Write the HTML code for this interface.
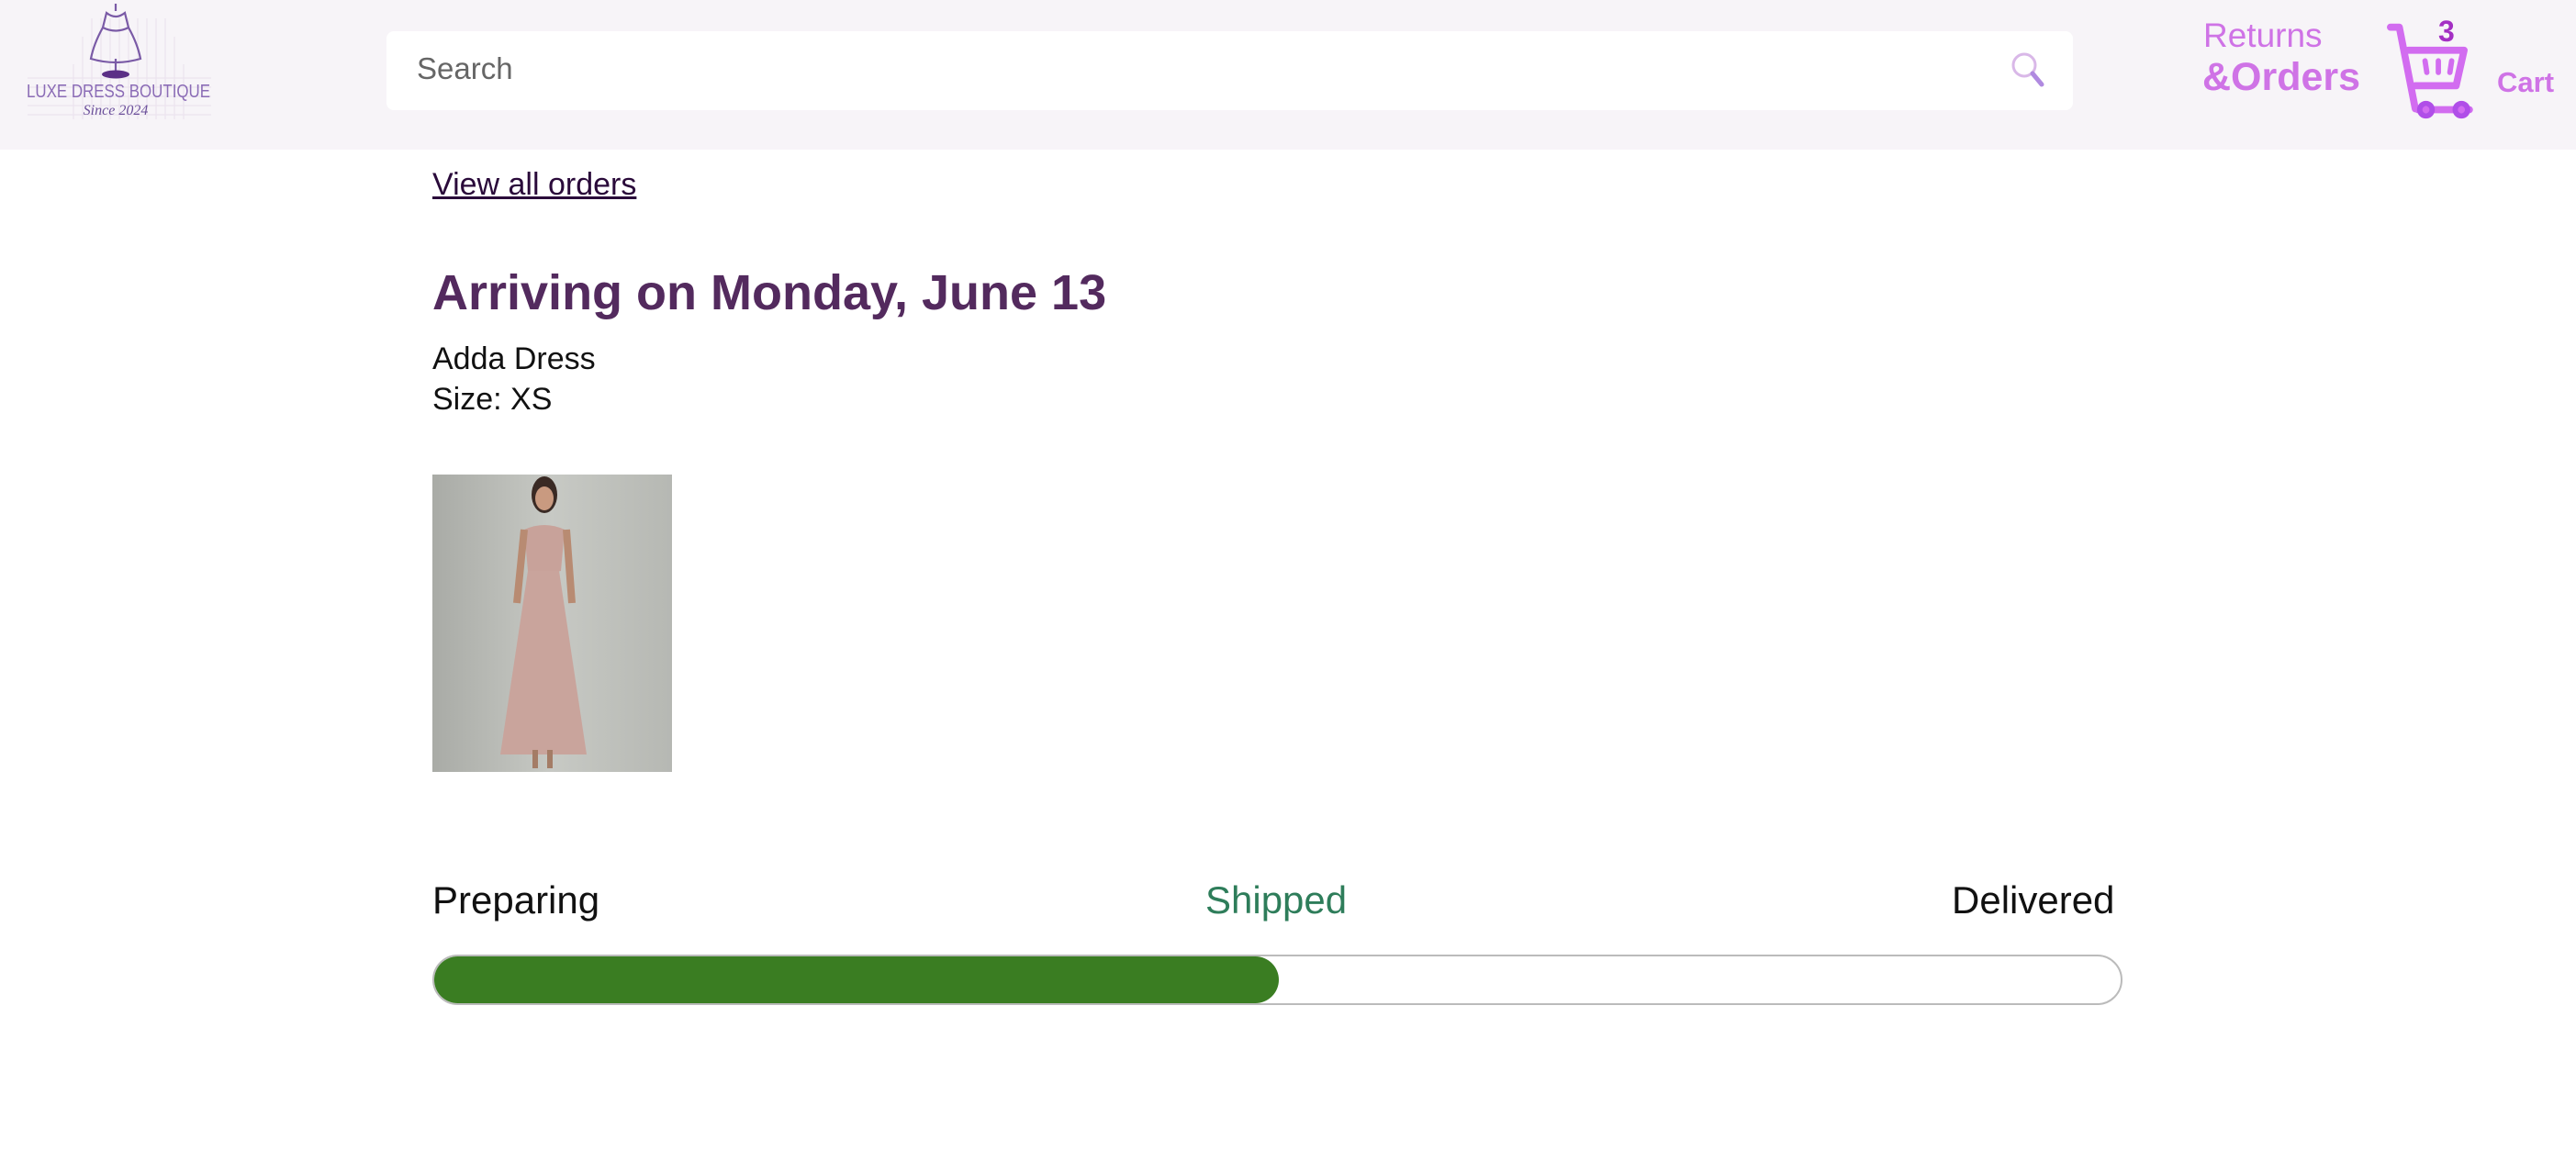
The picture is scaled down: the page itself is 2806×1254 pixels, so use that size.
<!DOCTYPE html>
<html><head><meta charset="utf-8"><style>
*{margin:0;padding:0;box-sizing:border-box}
body{width:2806px;height:1254px;background:#fff;font-family:"Liberation Sans",Arial,sans-serif;position:relative;overflow:hidden}
.hdr{position:absolute;left:0;top:0;width:2806px;height:163px;background:#f7f4f8}
.abs{position:absolute;white-space:nowrap}
.search{position:absolute;left:421px;top:34px;width:1837px;height:86px;background:#fff;border-radius:8px}
</style></head><body>
<div class="hdr"></div>
<svg class="abs" style="left:0;top:0" width="240" height="140" viewBox="0 0 240 140">
 <g stroke="#ebe4ef" stroke-width="1.2">
  <path d="M30 85h200M30 95h200M30 105h200M30 115h200M30 125h200M100 20v110M110 20v110M120 20v110M130 20v110M140 20v110M150 20v110M160 20v110M170 20v110M180 20v110M90 40v90M190 40v90M80 70v60M200 70v60"/>
 </g>
 <g fill="none" stroke="#7a5aa6" stroke-width="2.2">
  <path d="M126 4v8M116 14q10 8 20 0l4 16q-14 7-28 0zM112 30q-10 18-13 34q27 8 54 0q-3-16-13-34"/>
  <path d="M126 64v15"/>
 </g>
 <ellipse cx="126" cy="81" rx="15" ry="4.5" fill="#5b2f86"/>
 <text x="29" y="106" textLength="200" lengthAdjust="spacingAndGlyphs" font-size="20" fill="#8b6cb6" font-family="Liberation Sans">LUXE DRESS BOUTIQUE</text>
 <text x="126" y="125" text-anchor="middle" font-size="16" font-style="italic" fill="#6b4f9a" font-family="Liberation Serif">Since 2024</text>
</svg>
<div class="search"></div>
<div class="abs" style="left:454px;top:56px;font-size:33px;color:#666">Search</div>
<svg class="abs" style="left:2188px;top:54px" width="46" height="46" viewBox="0 0 46 46"><circle cx="17" cy="17" r="12" fill="none" stroke="#d9b8e8" stroke-width="3"/><path d="M26 26l10 12" stroke="#b08ae0" stroke-width="5" stroke-linecap="round"/></svg>
<div class="abs" style="left:2400px;top:18px;font-size:37px;color:#cf73e6">Returns</div>
<div class="abs" style="left:2399px;top:60px;font-size:43px;font-weight:bold;color:#cf73e6">&amp;Orders</div>
<svg class="abs" style="left:2600px;top:22px" width="116" height="108" viewBox="0 0 120 110"><g fill="none" stroke="#d26cf0" stroke-width="8" stroke-linejoin="round" stroke-linecap="round"><path d="M4 7h10l18 92M24 33h63l-9 40H32M35 100h58"/><path d="M43 45l2 13M58 45v13M73 45l-2 13" stroke-width="6"/></g><circle cx="44" cy="100" r="7" fill="none" stroke="#b04ee8" stroke-width="6"/><circle cx="84" cy="100" r="7" fill="none" stroke="#b04ee8" stroke-width="6"/></svg>
<div class="abs" style="left:2656px;top:16px;font-size:32px;font-weight:bold;color:#a42fc4">3</div>
<div class="abs" style="left:2720px;top:72px;font-size:31px;font-weight:bold;color:#cf73e6">Cart</div>
<div class="abs" style="left:471px;top:182px;font-size:34px;color:#2a0a3a;text-decoration:underline">View all orders</div>
<div class="abs" style="left:471px;top:288px;font-size:54px;font-weight:bold;color:#532a5e">Arriving on Monday, June 13</div>
<div class="abs" style="left:471px;top:372px;font-size:34px;color:#111">Adda Dress</div>
<div class="abs" style="left:471px;top:416px;font-size:34px;color:#111">Size: XS</div>
<svg class="abs" style="left:471px;top:517px" width="261" height="324" viewBox="0 0 261 324"><defs><linearGradient id="g" x1="0" x2="1"><stop offset="0" stop-color="#a9aba6"/><stop offset=".5" stop-color="#c7c9c4"/><stop offset="1" stop-color="#b6b8b3"/></linearGradient></defs><rect width="261" height="324" fill="url(#g)"/><ellipse cx="122" cy="22" rx="14" ry="20" fill="#3a2a24"/><ellipse cx="122" cy="26" rx="10" ry="13" fill="#c99a80"/><path d="M100 60q22-10 44 0l-4 45q-18 4-36 0z" fill="#c8a29a"/><path d="M104 105h34l30 200h-94z" fill="#c9a49c"/><path d="M100 60l-8 80M146 60l6 80" stroke="#b88b72" stroke-width="8"/><path d="M112 300v20M128 300v20" stroke="#a47c66" stroke-width="6"/></svg>
<div class="abs" style="left:471px;top:957px;font-size:42px;color:#111">Preparing</div>
<div class="abs" style="left:1313px;top:957px;font-size:42px;color:#2e7d5a">Shipped</div>
<div class="abs" style="left:2126px;top:957px;font-size:42px;color:#111">Delivered</div>
<div class="abs" style="left:471px;top:1040px;width:1841px;height:55px;border:2px solid #bbb;border-radius:28px;overflow:hidden;background:#fff"><div style="width:920px;height:100%;background:#3a7d22;border-radius:0 28px 28px 0"></div></div>
</body></html>
